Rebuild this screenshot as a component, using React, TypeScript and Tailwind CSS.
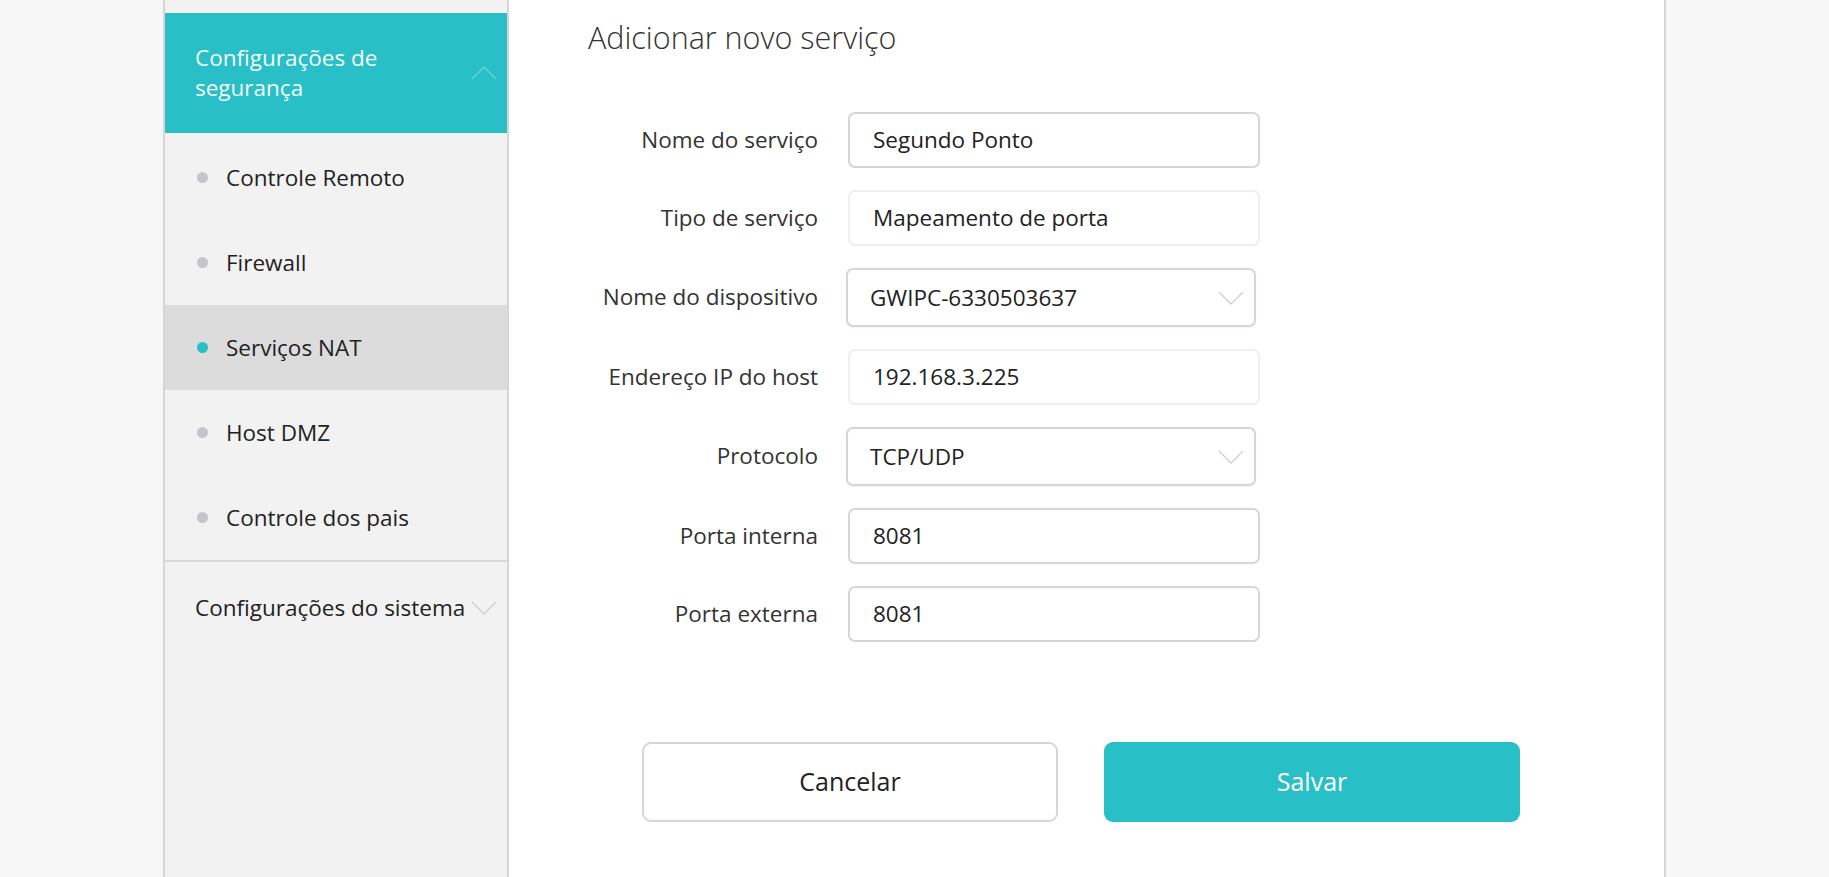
const font = { fontFamily: '"Open Sans", "Noto Sans", sans-serif' };

function Chevron({ up, className }: { up?: boolean; className?: string }) {
  return (
    <svg width="26" height="14" viewBox="0 0 26 14" className={className} fill="none">
      <path
        d={up ? "M1 13 L13 1 L25 13" : "M1 1 L13 13 L25 1"}
        stroke="currentColor"
        strokeWidth="1.3"
      />
    </svg>
  );
}

const menuItems = [
  { label: "Controle Remoto", active: false },
  { label: "Firewall", active: false },
  { label: "Serviços NAT", active: true },
  { label: "Host DMZ", active: false },
  { label: "Controle dos pais", active: false },
];

function Field({ label, value, kind }: { label: string; value: string; kind: "input" | "readonly" | "select" }) {
  return (
    <div className="flex items-center">
      <div className="w-[339px] text-right text-[22.5px] text-[#333] pr-[30px] leading-none">{label}</div>
      {kind === "select" ? (
        <div className="ml-[-2px] w-[410px] h-[59px] rounded-[7px] border-2 border-[#d6d6d6] shadow-[0_1px_2px_rgba(0,0,0,0.06)] flex items-center justify-between pl-[22px] pr-[10px] text-[22.5px] text-[#222]">
          <span>{value}</span>
          <Chevron className="text-[#cfcfcf]" />
        </div>
      ) : (
        <div
          className={
            "w-[412px] h-[56px] rounded-[7px] border-2 flex items-center pl-[23px] text-[22.5px] text-[#222] " +
            (kind === "readonly" ? "border-[#efefef]" : "border-[#d6d6d6]")
          }
        >
          {value}
        </div>
      )}
    </div>
  );
}

export default function App() {
  return (
    <div className="w-full h-[877px] bg-[#f7f7f7] flex overflow-hidden" style={font}>
      <div className="ml-[163px] w-[1503px] h-full flex">
        {/* sidebar */}
        <aside className="w-[346px] h-full bg-[#f2f2f2] border-x-2 border-[#d6d6d6] flex flex-col">
          <div className="h-[13px]" />
          <div className="h-[120px] bg-[#28bfc6] flex items-center justify-between pl-[30px] pr-[10px]">
            <div className="text-white text-[22.5px] leading-[30px] opacity-95">
              Configurações de
              <br />
              segurança
            </div>
            <Chevron up className="text-white/30" />
          </div>
          <div className="h-[2px]" />
          {menuItems.map((item) => (
            <div
              key={item.label}
              className={
                "h-[85px] flex items-center pl-[32px] gap-[18px] text-[22.5px] text-[#222] " +
                (item.active ? "bg-[#dcdcdc]" : "")
              }
            >
              <span
                className={"w-[11px] h-[11px] rounded-full " + (item.active ? "bg-[#28bfc6]" : "bg-[#c3c5ca]")}
              />
              <span>{item.label}</span>
            </div>
          ))}
          <div className="h-[2px] bg-[#d9d9d9]" />
          <div className="h-[92px] flex items-center justify-between pl-[30px] pr-[10px] text-[22.5px] text-[#222]">
            <span>Configurações do sistema</span>
            <Chevron className="text-[#cfcfcf]" />
          </div>
        </aside>

        {/* main */}
        <main className="flex-1 h-full bg-white border-r-2 border-[#d6d6d6] flex flex-col">
          <h1 className="pl-[79px] mt-[18px] text-[30.5px] font-light text-[#333] leading-[38px]">
            Adicionar novo serviço
          </h1>
          <div className="mt-[56px] flex flex-col gap-[22px]">
            <Field label="Nome do serviço" value="Segundo Ponto" kind="input" />
            <Field label="Tipo de serviço" value="Mapeamento de porta" kind="readonly" />
            <Field label="Nome do dispositivo" value="GWIPC-6330503637" kind="select" />
            <Field label="Endereço IP do host" value="192.168.3.225" kind="readonly" />
            <Field label="Protocolo" value="TCP/UDP" kind="select" />
            <Field label="Porta interna" value="8081" kind="input" />
            <Field label="Porta externa" value="8081" kind="input" />
          </div>
          <div className="mt-[100px] ml-[133px] flex gap-[46px]">
            <button className="w-[416px] h-[80px] rounded-[9px] border-2 border-[#d6d6d6] bg-white text-[25px] text-[#222]">
              Cancelar
            </button>
            <button className="w-[416px] h-[80px] rounded-[9px] bg-[#28bfc6] text-[25px] text-white">
              Salvar
            </button>
          </div>
        </main>
      </div>
    </div>
  );
}
